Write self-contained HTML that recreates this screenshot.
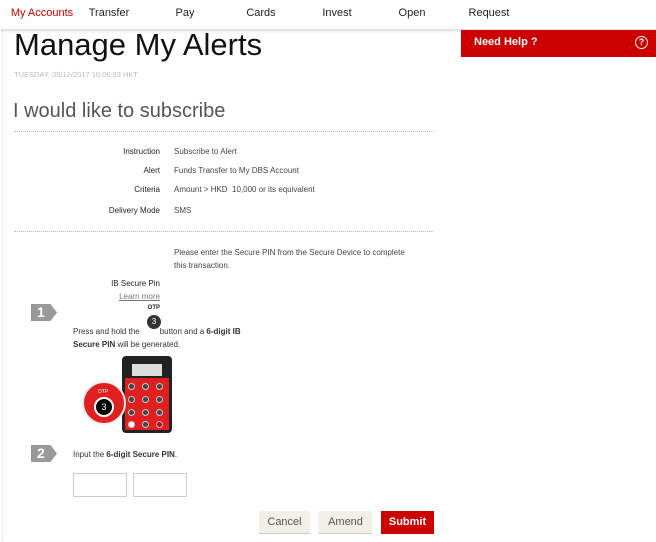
<!DOCTYPE html>
<html><head><meta charset="utf-8"><style>
*{margin:0;padding:0;box-sizing:border-box}
body{width:656px;height:542px;background:#fff;font-family:"Liberation Sans",sans-serif;position:relative;overflow:hidden;color:#222}
.a{position:absolute;white-space:nowrap}
.nav{position:absolute;left:0;top:0;width:656px;height:29px;background:#fff;box-shadow:0 2px 3px rgba(0,0,0,.15)}
.nav span{position:absolute;top:7px;font-size:11px;transform:translateX(-50%);color:#222}
.s{font-size:8px;color:#333}
.lab{position:absolute;right:496px;font-size:8px;color:#222;white-space:nowrap}
.val{position:absolute;left:174px;font-size:8px;color:#444;white-space:nowrap}
.dot{position:absolute;left:14px;width:420px;border-top:1px dotted #bbb}
.step{position:absolute;left:31px;width:26px;height:17px;background:#999;color:#fff;font-weight:bold;font-size:14px;line-height:17px;padding-left:6px;clip-path:polygon(0 0,75% 0,100% 50%,75% 100%,0 100%)}
.btn{position:absolute;top:511px;height:23px;font-size:11px;line-height:23px;text-align:center;background:#f2efe9;color:#555;border-bottom:1px solid #ccc}
.k{position:absolute;width:7px;height:7px;border-radius:50%;background:#444;border:1px solid #ccc}
</style></head><body>
<div class="a" style="left:2px;top:30px;height:512px;border-left:1px dotted #ddd"></div>
<div class="nav">
<span style="left:42px;color:#c00">My Accounts</span>
<span style="left:109px">Transfer</span>
<span style="left:185px">Pay</span>
<span style="left:261px">Cards</span>
<span style="left:337px">Invest</span>
<span style="left:412px">Open</span>
<span style="left:489px">Request</span>
</div>
<div class="a" style="left:461px;top:30px;width:195px;height:27px;background:#c00;color:#fff;font-size:11px;font-weight:bold;line-height:25px;padding-left:13px">Need Help ?
<span style="position:absolute;right:8px;top:6px;width:13px;height:13px;border:1.5px solid #fff;border-radius:50%;font-size:9px;line-height:10px;text-align:center">?</span></div>
<div class="a" style="left:14px;top:27px;font-size:31px;color:#111">Manage My Alerts</div>
<div class="a" style="left:14px;top:70px;font-size:7.5px;color:#bbb">TUESDAY, 05/12/2017 10:06:53 HKT</div>
<div class="a" style="left:13px;top:100px;font-size:20px;color:#555;font-weight:300">I would like to subscribe</div>
<div class="dot" style="top:131px"></div>
<div class="lab" style="top:147px">Instruction</div><div class="val" style="top:147px">Subscribe to Alert</div>
<div class="lab" style="top:166px">Alert</div><div class="val" style="top:166px">Funds Transfer to My DBS Account</div>
<div class="lab" style="top:185px">Criteria</div><div class="val" style="top:185px">Amount &gt; HKD &nbsp;10,000 or its equivalent</div>
<div class="lab" style="top:206px">Delivery Mode</div><div class="val" style="top:206px">SMS</div>
<div class="dot" style="top:231px"></div>
<div class="val" style="top:246px;line-height:13px">Please enter the Secure PIN from the Secure Device to complete<br>this transaction.</div>
<div class="lab" style="top:279px">IB Secure Pin</div>
<div class="lab" style="top:292px;color:#777;text-decoration:underline">Learn more</div>
<div class="lab" style="top:305px;font-size:6px;font-weight:bold">OTP</div>
<div class="step" style="top:304px">1</div>
<div class="a" style="left:147px;top:315px;width:14px;height:14px;border-radius:50%;background:#333;color:#fff;font-size:8px;text-align:center;line-height:14px">3</div>
<div class="a s" style="left:73px;top:325px;line-height:13px">Press and hold the &nbsp;&nbsp;&nbsp;&nbsp;&nbsp;&nbsp;&nbsp;&nbsp;button and a <b>6-digit IB</b><br><b>Secure PIN</b> will be generated.</div>
<div class="a" style="left:122px;top:356px;width:50px;height:77px;background:#222;border-radius:4px"></div>
<div class="a" style="left:132px;top:364px;width:30px;height:12px;background:#ddd"></div>
<div class="a" style="left:125px;top:378px;width:44px;height:52px;background:#e02020"></div>
<div class="k" style="left:128px;top:383px"></div><div class="k" style="left:142px;top:383px"></div><div class="k" style="left:156px;top:383px"></div>
<div class="k" style="left:128px;top:396px"></div><div class="k" style="left:142px;top:396px"></div><div class="k" style="left:156px;top:396px"></div>
<div class="k" style="left:128px;top:409px"></div><div class="k" style="left:142px;top:409px"></div><div class="k" style="left:156px;top:409px"></div>
<div class="k" style="left:128px;top:421px;background:#fff"></div><div class="k" style="left:142px;top:421px"></div><div class="k" style="left:156px;top:421px;background:#c00"></div>
<div class="a" style="left:82px;top:381px;width:44px;height:44px;border-radius:50%;background:#e02020;border:2px solid #eee"></div>
<div class="a" style="left:94px;top:397px;width:20px;height:20px;border-radius:50%;background:#000;border:2px solid #fff;color:#fff;font-size:9px;text-align:center;line-height:16px">3</div>
<div class="a" style="left:98px;top:389px;font-size:5px;color:#fff">OTP</div>
<div class="step" style="top:445px">2</div>
<div class="a s" style="left:73px;top:450px">Input the <b>6-digit Secure PIN</b>.</div>
<div class="a" style="left:73px;top:473px;width:54px;height:24px;border:1px solid #ccc"></div>
<div class="a" style="left:133px;top:473px;width:54px;height:24px;border:1px solid #ccc"></div>
<div class="btn" style="left:259px;width:51px">Cancel</div>
<div class="btn" style="left:319px;width:53px">Amend</div>
<div class="btn" style="left:381px;width:53px;background:#c00;color:#fff;font-weight:bold;border:0">Submit</div>
</body></html>
